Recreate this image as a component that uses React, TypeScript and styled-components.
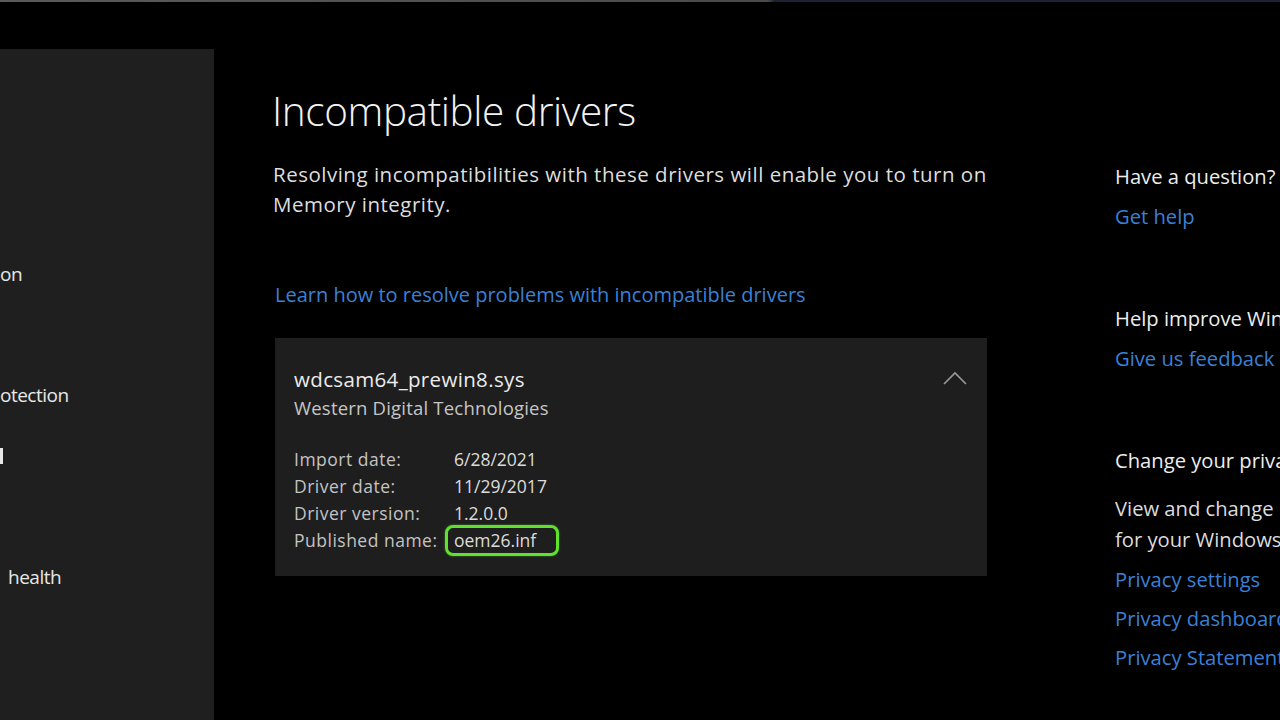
import React from "react";
import styled, { createGlobalStyle } from "styled-components";

const Global = createGlobalStyle`
  html, body { margin: 0; padding: 0; background: #000; }
  body { width: 1280px; height: 720px; overflow: hidden; font-family: "Open Sans", "Noto Sans", sans-serif; }
`;

const Frame = styled.div`
  width: 1280px;
  height: 720px;
  display: flex;
  flex-direction: column;
  background: #000;
  overflow: hidden;
`;

const TopEdge = styled.div`
  height: 2px;
  flex: none;
  background: linear-gradient(to right, #5a5a5a 0%, #4a4a4a 60%, #1d2233 60.5%, #1d2233 100%);
`;

const Body = styled.div`
  flex: 1;
  display: flex;
  padding-top: 47px;
  min-height: 0;
`;

const Sidebar = styled.nav`
  width: 214px;
  flex: none;
  background: #1f1f1f;
  display: flex;
  flex-direction: column;
  padding-top: 210px;
  box-sizing: border-box;
`;

const NavItem = styled.div<{ $gap: number; $indent?: number }>`
  color: #e8e8e8;
  font-size: 19px;
  line-height: 30px;
  height: 30px;
  margin-top: ${(p) => p.$gap}px;
  padding-left: ${(p) => p.$indent ?? 0}px;
  white-space: nowrap;
  letter-spacing: -0.5px;
`;

const NavBar = styled.span`
  display: inline-block;
  width: 3px;
  height: 16px;
  background: #e8e8e8;
  vertical-align: -2px;
`;

const Main = styled.main`
  width: 715px;
  flex: none;
  margin-left: 58px;
  display: flex;
  flex-direction: column;
`;

const Title = styled.h1`
  margin: 36px 0 0 0;
  font-weight: 300;
  font-size: 40.5px;
  line-height: 52px;
  color: #f2f2f2;
  letter-spacing: -0.4px;
`;

const Para = styled.p`
  margin: 22px 0 0 1px;
  font-size: 20.5px;
  line-height: 30px;
  color: #dedede;
  letter-spacing: 0.5px;
  white-space: nowrap;
`;

const Link = styled.a`
  color: #3b80d6;
  text-decoration: none;
  font-size: 20px;
  line-height: 30px;
  display: block;
`;

const MainLink = styled(Link)`
  margin: 61px 0 0 3px;
`;

const Card = styled.section`
  margin: 28px 0 0 3px;
  width: 712px;
  height: 238px;
  background: #1e1e1e;
  box-sizing: border-box;
  padding: 27px 19px 0 19px;
  display: flex;
  flex-direction: column;
`;

const CardHead = styled.div`
  display: flex;
  justify-content: space-between;
  align-items: flex-start;
`;

const CardTitle = styled.div`
  color: #ececec;
  font-size: 20.5px;
  line-height: 28px;
  letter-spacing: 0.35px;
`;

const CardSub = styled.div`
  color: #c6c6c6;
  font-size: 18.5px;
  line-height: 30px;
  letter-spacing: 0.2px;
`;

const Chevron = styled.svg`
  width: 26px;
  height: 16px;
  margin: 5px 0 0 0;
`;

const Details = styled.div`
  margin-top: 23px;
  display: grid;
  grid-template-columns: 160px auto;
  align-items: center;
  justify-content: start;
`;

const Label = styled.div`
  color: #c4c4c4;
  font-size: 17.5px;
  line-height: 27px;
  letter-spacing: 0.5px;
`;

const Value = styled.div`
  color: #dcdcdc;
  font-size: 17.5px;
  line-height: 27px;
  position: relative;
`;

const Highlight = styled.span`
  position: absolute;
  left: -9px;
  top: -2px;
  width: 114px;
  height: 31px;
  box-sizing: border-box;
  border: 3px solid #5fe22e;
  border-radius: 8px;
  box-shadow: 0 0 2px rgba(95, 226, 46, 0.6);
`;

const Aside = styled.aside`
  margin-left: 128px;
  flex: 1;
  min-width: 0;
  display: flex;
  flex-direction: column;
  padding-top: 112px;
  overflow: hidden;
`;

const AsideGroup = styled.div<{ $gap: number }>`
  margin-top: ${(p) => p.$gap}px;
  display: flex;
  flex-direction: column;
`;

const AsideHead = styled.div`
  color: #ededed;
  font-size: 20.2px;
  line-height: 30px;
  white-space: nowrap;
`;

const AsideText = styled.div`
  color: #dcdcdc;
  font-size: 20.2px;
  line-height: 31px;
  white-space: nowrap;
  margin-top: 18px;
`;

const AsideLink = styled(Link)<{ $gap: number }>`
  white-space: nowrap;
  font-size: 20.2px;
  margin-top: ${(p) => p.$gap}px;
`;

const rows: [string, string][] = [
  ["Import date:", "6/28/2021"],
  ["Driver date:", "11/29/2017"],
  ["Driver version:", "1.2.0.0"],
  ["Published name:", "oem26.inf"],
];

export default function App() {
  return (
    <Frame>
      <Global />
      <TopEdge />
      <Body>
        <Sidebar>
          <NavItem $gap={0}>on</NavItem>
          <NavItem $gap={91}>otection</NavItem>
          <NavItem $gap={30}>
            <NavBar />
          </NavItem>
          <NavItem $gap={92} $indent={8}>
            health
          </NavItem>
        </Sidebar>
        <Main>
          <Title>Incompatible drivers</Title>
          <Para>
            Resolving incompatibilities with these drivers will enable you to turn on
            <br />
            Memory integrity.
          </Para>
          <MainLink>Learn how to resolve problems with incompatible drivers</MainLink>
          <Card>
            <CardHead>
              <div>
                <CardTitle>wdcsam64_prewin8.sys</CardTitle>
                <CardSub>Western Digital Technologies</CardSub>
              </div>
              <Chevron viewBox="0 0 26 16">
                <path d="M2 14 L13 3 L24 14" fill="none" stroke="#9a9a9a" strokeWidth="1.6" />
              </Chevron>
            </CardHead>
            <Details>
              {rows.map(([l, v], i) => (
                <React.Fragment key={l}>
                  <Label>{l}</Label>
                  <Value>
                    {v}
                    {i === rows.length - 1 && <Highlight />}
                  </Value>
                </React.Fragment>
              ))}
            </Details>
          </Card>
        </Main>
        <Aside>
          <AsideGroup $gap={0}>
            <AsideHead>Have a question?</AsideHead>
            <AsideLink $gap={10}>Get help</AsideLink>
          </AsideGroup>
          <AsideGroup $gap={72}>
            <AsideHead>Help improve Windows Security</AsideHead>
            <AsideLink $gap={10}>Give us feedback</AsideLink>
          </AsideGroup>
          <AsideGroup $gap={72}>
            <AsideHead>Change your privacy settings</AsideHead>
            <AsideText>
              View and change privacy settings
              <br />
              for your Windows 10 device.
            </AsideText>
            <AsideLink $gap={9}>Privacy settings</AsideLink>
            <AsideLink $gap={9}>Privacy dashboard</AsideLink>
            <AsideLink $gap={9}>Privacy Statement</AsideLink>
          </AsideGroup>
        </Aside>
      </Body>
    </Frame>
  );
}
